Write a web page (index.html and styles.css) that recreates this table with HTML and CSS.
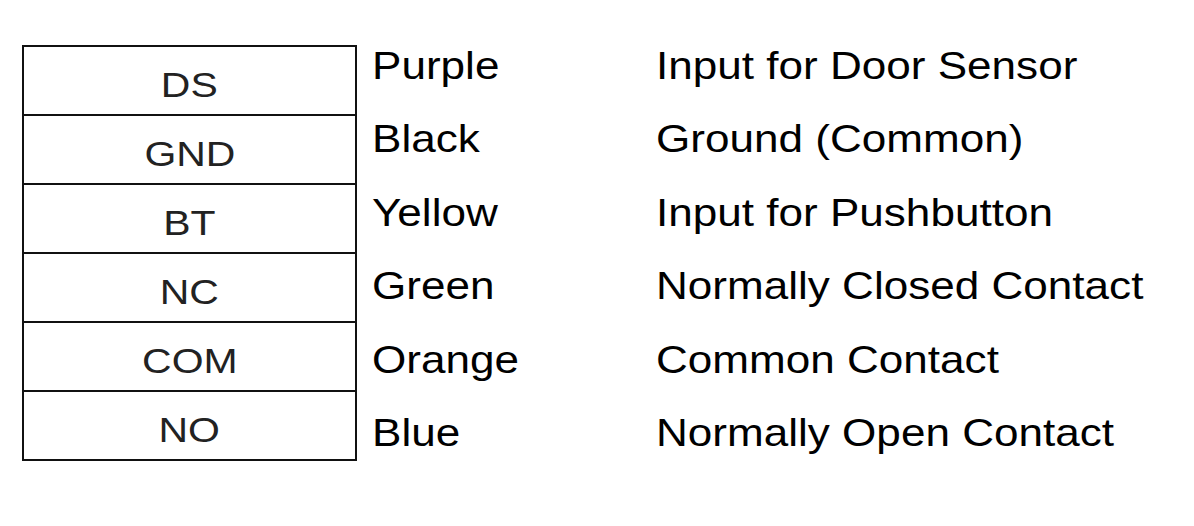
FILE: index.html
```html
<!DOCTYPE html>
<html>
<head>
<meta charset="utf-8">
<link rel="stylesheet" href="styles.css">
</head>
<body>
<div class="page">
  <div class="terminals">
    <div class="term"><span class="tlabel">DS</span></div>
    <div class="term"><span class="tlabel">GND</span></div>
    <div class="term"><span class="tlabel">BT</span></div>
    <div class="term"><span class="tlabel">NC</span></div>
    <div class="term"><span class="tlabel">COM</span></div>
    <div class="term last"><span class="tlabel">NO</span></div>
  </div>
  <div class="col colors">
    <div class="line"><span class="txt">Purple</span></div>
    <div class="line"><span class="txt">Black</span></div>
    <div class="line"><span class="txt">Yellow</span></div>
    <div class="line"><span class="txt">Green</span></div>
    <div class="line"><span class="txt">Orange</span></div>
    <div class="line"><span class="txt">Blue</span></div>
  </div>
  <div class="col desc">
    <div class="line"><span class="txt">Input for Door Sensor</span></div>
    <div class="line"><span class="txt">Ground (Common)</span></div>
    <div class="line"><span class="txt">Input for Pushbutton</span></div>
    <div class="line"><span class="txt">Normally Closed Contact</span></div>
    <div class="line"><span class="txt">Common Contact</span></div>
    <div class="line"><span class="txt">Normally Open Contact</span></div>
  </div>
</div>
</body>
</html>
```

FILE: styles.css
```css
html, body {
  margin: 0;
  padding: 0;
  background: #ffffff;
}

body {
  width: 1194px;
  height: 526px;
  overflow: hidden;
  font-family: "Liberation Sans", Arial, sans-serif;
  color: #000;
}

.page {
  display: flex;
  align-items: flex-start;
  padding-left: 22px;
  padding-top: 45px;
}

.terminals {
  width: 335px;
  box-sizing: border-box;
  border: 2px solid #111;
  display: flex;
  flex-direction: column;
}

.term {
  height: 69px;
  box-sizing: border-box;
  border-bottom: 2px solid #111;
  padding-top: 9px;
  display: flex;
  align-items: center;
  justify-content: center;
}

.term.last {
  height: 67px;
  border-bottom: none;
}

.tlabel {
  display: inline-block;
  font-size: 35px;
  line-height: 40px;
  color: #222;
  transform: scaleX(1.17);
  transform-origin: center;
}

.col {
  display: flex;
  flex-direction: column;
  margin-top: -16px;
}

.colors {
  margin-left: 15px;
  width: 284px;
}

.line {
  height: 73.4px;
  line-height: 73.4px;
  font-size: 39px;
  white-space: nowrap;
}

.txt {
  display: inline-block;
  transform: scaleX(1.13);
  transform-origin: left center;
}
```
